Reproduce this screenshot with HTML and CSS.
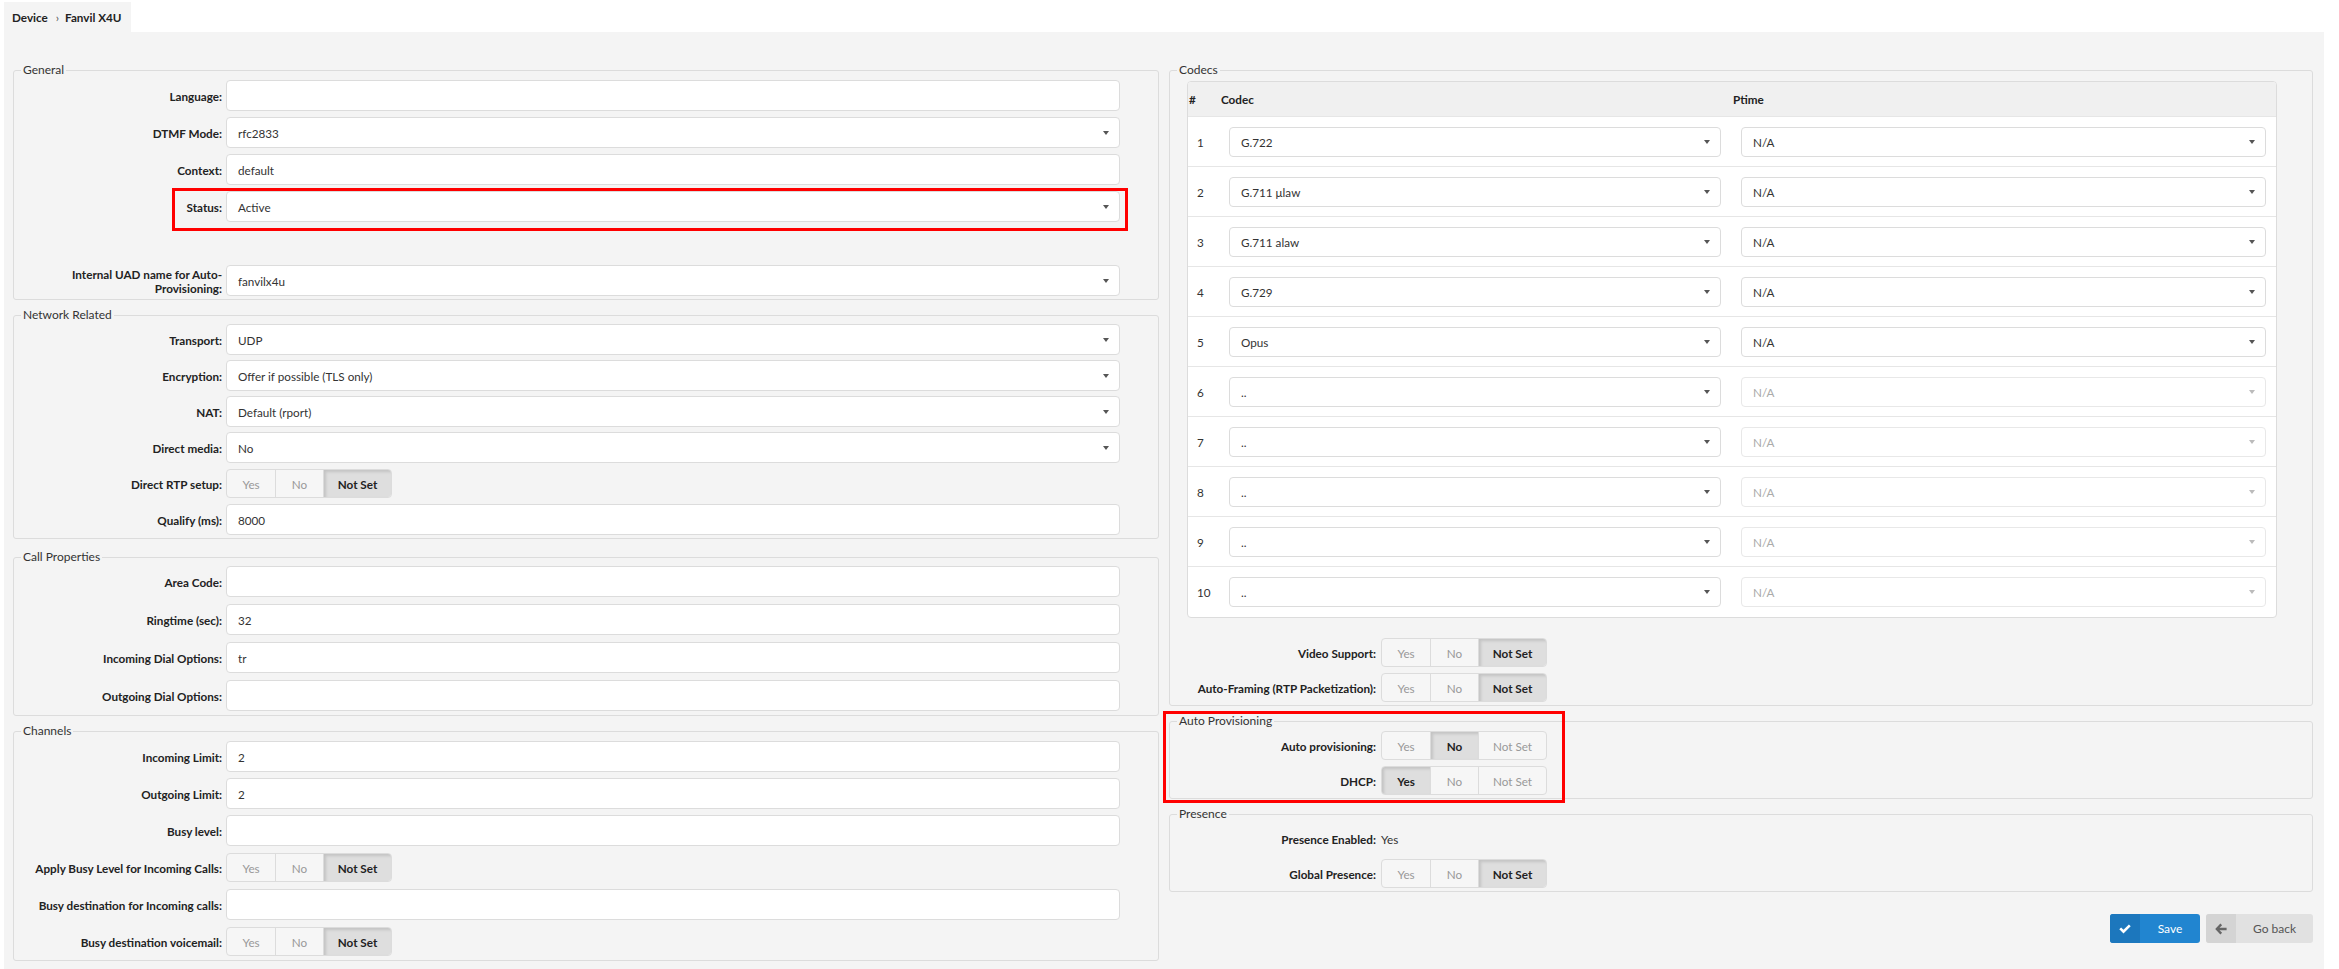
FILE: index.html
```html
<!DOCTYPE html>
<html lang="en">
<head>
<meta charset="utf-8">
<title>Device › Fanvil X4U</title>
<link rel="stylesheet" href="styles.css">
</head>
<body>
<div class="page">
  <div class="tabbar">
    <div class="tab">Device <span class="sep">›</span> Fanvil X4U</div>
  </div>
  <div class="panel">
    <!-- LEFT COLUMN -->
    <div class="col col-left">
      <fieldset class="box">
        <legend>General</legend>
        <div class="row"><div class="lbl">Language:</div><div class="ctl"><div class="input"></div></div></div>
        <div class="row"><div class="lbl">DTMF Mode:</div><div class="ctl"><div class="input select">rfc2833</div></div></div>
        <div class="row"><div class="lbl">Context:</div><div class="ctl"><div class="input">default</div></div></div>
        <div class="row row-marked"><div class="lbl">Status:</div><div class="ctl"><div class="input select">Active</div></div><div class="mark mark-status"></div></div>
        <div class="spacer"></div>
        <div class="row"><div class="lbl">Internal UAD name for Auto-Provisioning:</div><div class="ctl"><div class="input select">fanvilx4u</div></div></div>
      </fieldset>

      <fieldset class="box box-tight">
        <legend>Network Related</legend>
        <div class="row"><div class="lbl">Transport:</div><div class="ctl"><div class="input select">UDP</div></div></div>
        <div class="row"><div class="lbl">Encryption:</div><div class="ctl"><div class="input select">Offer if possible (TLS only)</div></div></div>
        <div class="row"><div class="lbl">NAT:</div><div class="ctl"><div class="input select">Default (rport)</div></div></div>
        <div class="row"><div class="lbl">Direct media:</div><div class="ctl"><div class="input select">No</div></div></div>
        <div class="row"><div class="lbl">Direct RTP setup:</div><div class="ctl"><div class="toggle"><span>Yes</span><span>No</span><span class="on">Not Set</span></div></div></div>
        <div class="row"><div class="lbl">Qualify (ms):</div><div class="ctl"><div class="input">8000</div></div></div>
      </fieldset>

      <fieldset class="box box-loose">
        <legend>Call Properties</legend>
        <div class="row"><div class="lbl">Area Code:</div><div class="ctl"><div class="input"></div></div></div>
        <div class="row"><div class="lbl">Ringtime (sec):</div><div class="ctl"><div class="input">32</div></div></div>
        <div class="row"><div class="lbl">Incoming Dial Options:</div><div class="ctl"><div class="input">tr</div></div></div>
        <div class="row"><div class="lbl">Outgoing Dial Options:</div><div class="ctl"><div class="input"></div></div></div>
      </fieldset>

      <fieldset class="box">
        <legend>Channels</legend>
        <div class="row"><div class="lbl">Incoming Limit:</div><div class="ctl"><div class="input">2</div></div></div>
        <div class="row"><div class="lbl">Outgoing Limit:</div><div class="ctl"><div class="input">2</div></div></div>
        <div class="row"><div class="lbl">Busy level:</div><div class="ctl"><div class="input"></div></div></div>
        <div class="row"><div class="lbl">Apply Busy Level for Incoming Calls:</div><div class="ctl"><div class="toggle"><span>Yes</span><span>No</span><span class="on">Not Set</span></div></div></div>
        <div class="row"><div class="lbl">Busy destination for Incoming calls:</div><div class="ctl"><div class="input"></div></div></div>
        <div class="row"><div class="lbl">Busy destination voicemail:</div><div class="ctl"><div class="toggle"><span>Yes</span><span>No</span><span class="on">Not Set</span></div></div></div>
      </fieldset>
    </div>

    <!-- RIGHT COLUMN -->
    <div class="col col-right">
      <fieldset class="box box-right">
        <legend>Codecs</legend>
        <div class="ctable">
          <div class="crow chead"><div class="c0">#</div><div class="c1">Codec</div><div class="c2">Ptime</div></div>
          <div class="crow"><div class="cn">1</div><div class="cc"><div class="input select sm">G.722</div></div><div class="cc"><div class="input select sm">N/A</div></div></div>
          <div class="crow"><div class="cn">2</div><div class="cc"><div class="input select sm">G.711 μlaw</div></div><div class="cc"><div class="input select sm">N/A</div></div></div>
          <div class="crow"><div class="cn">3</div><div class="cc"><div class="input select sm">G.711 alaw</div></div><div class="cc"><div class="input select sm">N/A</div></div></div>
          <div class="crow"><div class="cn">4</div><div class="cc"><div class="input select sm">G.729</div></div><div class="cc"><div class="input select sm">N/A</div></div></div>
          <div class="crow"><div class="cn">5</div><div class="cc"><div class="input select sm">Opus</div></div><div class="cc"><div class="input select sm">N/A</div></div></div>
          <div class="crow"><div class="cn">6</div><div class="cc"><div class="input select sm">..</div></div><div class="cc"><div class="input select sm disabled">N/A</div></div></div>
          <div class="crow"><div class="cn">7</div><div class="cc"><div class="input select sm">..</div></div><div class="cc"><div class="input select sm disabled">N/A</div></div></div>
          <div class="crow"><div class="cn">8</div><div class="cc"><div class="input select sm">..</div></div><div class="cc"><div class="input select sm disabled">N/A</div></div></div>
          <div class="crow"><div class="cn">9</div><div class="cc"><div class="input select sm">..</div></div><div class="cc"><div class="input select sm disabled">N/A</div></div></div>
          <div class="crow"><div class="cn">10</div><div class="cc"><div class="input select sm">..</div></div><div class="cc"><div class="input select sm disabled">N/A</div></div></div>
        </div>
        <div class="row"><div class="lbl">Video Support:</div><div class="ctl"><div class="toggle"><span>Yes</span><span>No</span><span class="on">Not Set</span></div></div></div>
        <div class="row"><div class="lbl">Auto-Framing (RTP Packetization):</div><div class="ctl"><div class="toggle"><span>Yes</span><span>No</span><span class="on">Not Set</span></div></div></div>
      </fieldset>

      <div class="wrap-marked">
        <fieldset class="box box-right box-flush">
          <legend>Auto Provisioning</legend>
          <div class="row"><div class="lbl">Auto provisioning:</div><div class="ctl"><div class="toggle"><span>Yes</span><span class="on">No</span><span>Not Set</span></div></div></div>
          <div class="row"><div class="lbl">DHCP:</div><div class="ctl"><div class="toggle"><span class="on">Yes</span><span>No</span><span>Not Set</span></div></div></div>
        </fieldset>
        <div class="mark mark-ap"></div>
      </div>

      <fieldset class="box box-right">
        <legend>Presence</legend>
        <div class="row row-text"><div class="lbl">Presence Enabled:</div><div class="ctl plain">Yes</div></div>
        <div class="row"><div class="lbl">Global Presence:</div><div class="ctl"><div class="toggle"><span>Yes</span><span>No</span><span class="on">Not Set</span></div></div></div>
      </fieldset>

      <div class="actions">
        <button class="btn btn-save" type="button">
          <span class="ic"><svg width="12" height="10" viewBox="0 0 12 10"><path d="M0.3 5.2 L2.1 3.4 L4.5 5.8 L9.9 0.4 L11.7 2.2 L4.5 9.4 Z" fill="#fff"/></svg></span>
          <span class="txt">Save</span>
        </button>
        <button class="btn btn-back" type="button">
          <span class="ic"><svg width="12" height="12" viewBox="0 0 12 12"><path d="M5.4 0.6 L7.1 2.3 L4.5 4.8 H11.6 V7.2 H4.5 L7.1 9.7 L5.4 11.4 L0.2 6 Z" fill="#666"/></svg></span>
          <span class="txt">Go back</span>
        </button>
      </div>
    </div>
  </div>
</div>
</body>
</html>
```

FILE: styles.css
```css
* { box-sizing: border-box; }

body {
  margin: 0;
  background: #fff;
  font-family: Lato, "Open Sans", "Liberation Sans", sans-serif;
  font-size: 11.7px;
  color: #333;
}

.page {
  padding: 2px 15px 0 4px;
}

.tabbar {
  display: flex;
}

.tab {
  display: flex;
  align-items: center;
  height: 30px;
  padding: 0 9px 0 8px;
  background: #f4f4f4;
  font-weight: 700;
  color: #222;
}

.tab .sep {
  margin: 0 6px 0 8px;
  font-weight: 400;
  color: #555;
}

.panel {
  background: #f4f4f4;
  min-height: 937px;
  padding: 30px 11px 20px 9px;
  display: grid;
  grid-template-columns: 1146px 1144px;
  column-gap: 10px;
  align-items: start;
}

.col {
  min-width: 0;
}

.box {
  margin: 0 0 7px;
  padding: 2px 38px 3px 0;
  border: 1px solid #dcdcdc;
  border-radius: 3px;
  min-width: 0;
}

.box-right {
  padding-right: 35px;
}

.box legend {
  margin-left: 7px;
  padding: 0 2px;
  line-height: 16px;
  font-size: 12px;
  color: #333;
}

.row {
  display: flex;
  align-items: center;
  margin-bottom: 6px;
}

.col-left .row {
  min-height: 31px;
}

.box-tight {
  padding-top: 1px;
  margin-bottom: 10px;
}

.box-tight .row {
  margin-bottom: 5px;
}

.box-loose {
  padding-top: 1px;
  padding-bottom: 4px;
}

.box-loose .row {
  margin-bottom: 7px;
}

.row:last-child,
.box-tight .row:last-child,
.box-loose .row:last-child {
  margin-bottom: 0;
}

.row > .lbl {
  flex: 0 0 208px;
  margin-right: 4px;
  text-align: right;
  font-weight: 700;
  color: #222;
  line-height: 14px;
}

.box-right .row > .lbl {
  flex-basis: 206px;
  margin-right: 5px;
}

.ctl {
  flex: 1;
  min-width: 0;
}

.plain {
  color: #333;
}

.row-text {
  min-height: 29px;
}

.spacer {
  height: 31px;
  margin-bottom: 6px;
}

.input {
  position: relative;
  display: flex;
  align-items: center;
  height: 31px;
  padding: 0 11px;
  background: #fff;
  border: 1px solid #dcdcdc;
  border-radius: 4px;
  color: #333;
  white-space: nowrap;
}

.input.sm {
  height: 30px;
}

.select::after {
  content: "";
  position: absolute;
  right: 10px;
  top: 50%;
  margin-top: -2px;
  border-left: 3px solid transparent;
  border-right: 3px solid transparent;
  border-top: 4px solid #555;
}

.input.disabled {
  border-color: #e8e8e8;
  color: #aaa;
}

.input.disabled::after {
  border-top-color: #bbb;
}

/* toggle group */
.toggle {
  display: inline-flex;
  height: 29px;
  border: 1px solid #dcdcdc;
  border-radius: 4px;
  background: #f6f6f6;
  overflow: hidden;
}

.toggle span {
  display: flex;
  align-items: center;
  justify-content: center;
  width: 48px;
  color: #999;
}

.toggle span + span {
  border-left: 1px solid #dcdcdc;
}

.toggle span:last-child {
  width: 68px;
}

.toggle span.on {
  background: #dedede;
  color: #222;
  font-weight: 700;
  box-shadow: inset 2px 2px 3px rgba(0, 0, 0, 0.12);
}

/* red annotation boxes */
.row-marked,
.wrap-marked {
  position: relative;
}

.mark {
  position: absolute;
  border: 3px solid #f00;
  pointer-events: none;
}

.mark-status {
  left: 158px;
  right: -8px;
  top: -3px;
  bottom: -9px;
}

.wrap-marked {
  margin-bottom: 7px;
}

.box-flush {
  margin-bottom: 0;
}

.mark-ap {
  left: -6px;
  top: -2px;
  width: 402px;
  height: 92px;
}

/* codec table */
.ctable {
  margin: 1px 0 20px 17px;
  background: #fff;
  border: 1px solid #dcdcdc;
  border-radius: 4px;
  overflow: hidden;
}

.crow {
  display: grid;
  grid-template-columns: 31px 512px 1fr;
  align-items: center;
  height: 50px;
  border-bottom: 1px solid #e6e6e6;
}

.crow:last-child {
  border-bottom: 0;
}

.chead {
  height: 35px;
  background: #f0f0f0;
  font-weight: 700;
  color: #222;
}

.chead .c0 { padding-left: 1px; }
.chead .c1,
.chead .c2 { padding-left: 2px; }

.cn {
  padding-left: 9px;
  color: #333;
}

.cc {
  padding: 0 10px;
}

/* buttons */
.actions {
  display: flex;
  justify-content: flex-end;
  gap: 6px;
  margin-top: 22px;
}

.btn {
  display: inline-flex;
  align-items: stretch;
  height: 29px;
  padding: 0;
  border: 0;
  border-radius: 3px;
  overflow: hidden;
  font-family: inherit;
  font-size: 12px;
  cursor: pointer;
}

.btn .ic {
  display: flex;
  align-items: center;
  justify-content: center;
  width: 30px;
}

.btn .txt {
  flex: 1;
  display: flex;
  align-items: center;
  justify-content: center;
}

.btn-save {
  width: 90px;
  background: #2185d0;
  color: #fff;
}

.btn-save .ic {
  background: #1c77bd;
}

.btn-back {
  width: 107px;
  background: #e1e1e1;
  color: #555;
}

.btn-back .ic {
  background: #d4d4d4;
}
```
